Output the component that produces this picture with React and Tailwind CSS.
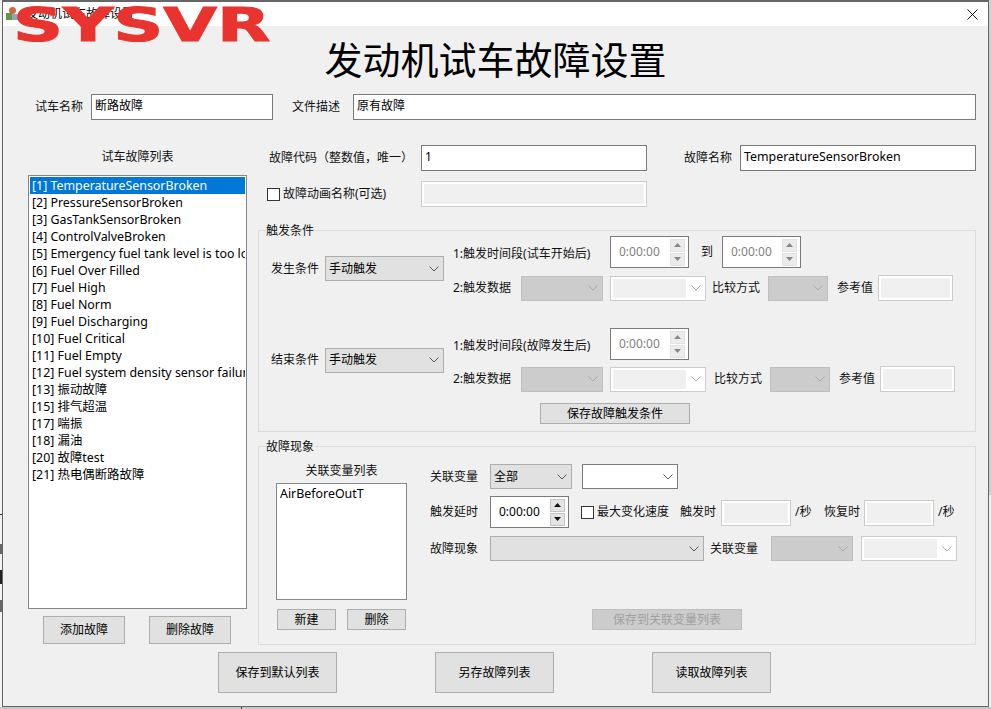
import React from "react";

const faults = [
  "[1] TemperatureSensorBroken",
  "[2] PressureSensorBroken",
  "[3] GasTankSensorBroken",
  "[4] ControlValveBroken",
  "[5] Emergency fuel tank level is too low",
  "[6] Fuel Over Filled",
  "[7] Fuel High",
  "[8] Fuel Norm",
  "[9] Fuel Discharging",
  "[10] Fuel Critical",
  "[11] Fuel Empty",
  "[12] Fuel system density sensor failure",
  "[13] 振动故障",
  "[15] 排气超温",
  "[17] 喘振",
  "[18] 漏油",
  "[20] 故障test",
  "[21] 热电偶断路故障",
];

function Chevron({ color = "#555" }) {
  return (
    <svg width="10" height="6" viewBox="0 0 10 6" fill="none" className="shrink-0">
      <path d="M0.5 0.5 L5 5 L9.5 0.5" stroke={color} strokeWidth="1" />
    </svg>
  );
}

function TextBox({ value = "", className = "" }) {
  return (
    <div className={`h-[26px] shrink-0 border border-[#7a7a7a] bg-white pl-[3px] leading-[22px] text-black ${className}`}>
      {value}
    </div>
  );
}

function OffBox({ className = "" }) {
  return <div className={`h-[26px] shrink-0 border border-[#ccc] bg-[#f0f0f0] shadow-[inset_0_0_0_2px_#fff] ${className}`} />;
}

function Select({ value = "", className = "" }) {
  return (
    <div className={`flex h-[25px] shrink-0 items-center justify-between border border-[#adadad] bg-[#e1e1e1] pl-[3px] pr-[4px] text-black ${className}`}>
      <span>{value}</span>
      <Chevron />
    </div>
  );
}

function WhiteSelect({ className = "" }) {
  return (
    <div className={`flex h-[25px] shrink-0 items-center justify-end border border-[#7a7a7a] bg-white pr-[4px] ${className}`}>
      <Chevron />
    </div>
  );
}

function OffSelect({ className = "" }) {
  return (
    <div className={`flex h-[25px] shrink-0 items-center justify-end border border-[#bfbfbf] bg-[#ccc] pr-[4px] ${className}`}>
      <Chevron color="#aaa" />
    </div>
  );
}

function OffWhiteSelect({ className = "" }) {
  return (
    <div className={`flex h-[25px] shrink-0 items-center border border-[#ccc] bg-white pl-[2px] pr-[4px] ${className}`}>
      <div className="h-[19px] w-[73px] bg-[#f0f0f0]" />
      <div className="flex flex-1 justify-end">
        <Chevron color="#aaa" />
      </div>
    </div>
  );
}

function Arrow({ up, color }) {
  return (
    <svg width="7" height="4" viewBox="0 0 7 4" className="shrink-0">
      <path d={up ? "M3.5 0 L7 4 L0 4 Z" : "M0 0 L7 0 L3.5 4 Z"} fill={color} />
    </svg>
  );
}

function Spin({ off = true }) {
  const btn = off
    ? "border-[#e2e2e2] bg-[#ececec]"
    : "border-[#c4c4c4] bg-[#e4e4e4]";
  const color = off ? "#888" : "#111";
  return (
    <div className="flex h-[32px] w-[79px] shrink-0 items-center justify-between border border-[#7a7a7a] bg-white pl-[8px] pr-[3px]">
      <span className={off ? "text-[#7f7f7f]" : "text-black"}>0:00:00</span>
      <div className="flex flex-col gap-[1px]">
        <div className={`flex h-[13px] w-[15px] items-center justify-center border ${btn}`}>
          <Arrow up color={color} />
        </div>
        <div className={`flex h-[13px] w-[15px] items-center justify-center border ${btn}`}>
          <Arrow color={color} />
        </div>
      </div>
    </div>
  );
}

function Button({ children, className = "" }) {
  return (
    <div className={`flex shrink-0 items-center justify-center border border-[#adadad] bg-[#e1e1e1] text-black ${className}`}>
      {children}
    </div>
  );
}

function Check({ className = "" }) {
  return <div className={`h-[13px] w-[13px] shrink-0 border border-[#333] bg-white ${className}`} />;
}

function Legend({ children }) {
  return (
    <div className="absolute -top-[9px] left-[7px] h-[18px] bg-[#f0f0f0] pr-[1px] leading-[18px]">{children}</div>
  );
}

function TriggerBlock({ top, label, first, second, x }) {
  return (
    <div className={`flex ${top}`}>
      <div className="flex w-[194px] shrink-0 items-center">
        <span className="ml-[12px] w-[54px] shrink-0">{label}</span>
        <Select value="手动触发" className="w-[119px]" />
      </div>
      <div className="flex flex-col">
        <div className="flex h-[32px] items-center">
          <span className="w-[157px] shrink-0 pt-[3px]">{first}</span>
          <Spin />
          {second && (
            <>
              <span className="ml-[12px] w-[21px] shrink-0">到</span>
              <Spin />
            </>
          )}
        </div>
        <div className={`flex h-[26px] items-center ${x.mt}`}>
          <span className="w-[68px] shrink-0">2:触发数据</span>
          <OffSelect className="w-[82px]" />
          <OffWhiteSelect className="ml-[7px] w-[96px]" />
          <span className={`${x.ml} w-[56px] shrink-0`}>比较方式</span>
          <OffSelect className="w-[60px]" />
          <span className="ml-[9px] w-[41px] shrink-0">参考值</span>
          <OffBox className="w-[75px]" />
        </div>
      </div>
    </div>
  );
}

export default function App() {
  return (
    <div className="relative h-[709px] w-[991px] overflow-hidden bg-[#f2f2f2] pl-[2px] font-['Noto_Sans','Noto_Sans_CJK_SC',sans-serif] text-[12px] text-[#111]">
      <div className="absolute bottom-0 left-0 h-[2px] w-full bg-[#c6c6c6]" />
      <div className="absolute right-0 top-0 h-[495px] w-[2px] bg-[#cfcfcf]" />
      <div className="absolute bottom-0 left-[241px] h-[2px] w-[1px] bg-[#444]" />
      <div className="absolute left-0 top-[570px] h-[14px] w-[2px] bg-[#222]" />
      <div className="absolute left-0 top-[514px] h-[1px] w-[2px] bg-[#222]" />
      <div className="absolute left-0 top-[544px] h-[10px] w-[2px] bg-[#666]" />
      <div className="absolute left-0 top-[600px] h-[12px] w-[2px] bg-[#666]" />

      <div className="relative flex h-[707px] w-[987px] flex-col border border-t-2 border-[#666]">
        <div className="flex h-[24px] shrink-0 items-center bg-white pl-[3px]">
          <svg width="12" height="14" viewBox="0 0 12 14" className="shrink-0">
            <circle cx="6.5" cy="3.5" r="3.5" fill="#d9653b" />
            <rect x="0" y="6" width="6" height="7" fill="#5c9a4a" />
            <rect x="6" y="7" width="6" height="6" fill="#8fa6bf" />
          </svg>
          <span className="ml-[8px] text-black">发动机试车故障设置</span>
          <svg width="11" height="11" viewBox="0 0 11 11" className="ml-auto mr-[10px] shrink-0">
            <path d="M0.5 0.5 L10.5 10.5 M10.5 0.5 L0.5 10.5" stroke="#111" strokeWidth="1" />
          </svg>
        </div>
        <div className="flex flex-1 flex-col bg-[#f0f0f0]">
          <h1 className="mt-[13px] h-[41px] text-center text-[38px] font-normal leading-[40px] text-black">发动机试车故障设置</h1>

          <div className="mt-[14px] flex h-[26px] items-center pl-[32px]">
            <span className="w-[56px] shrink-0">试车名称</span>
            <TextBox value="断路故障" className="w-[182px]" />
            <span className="ml-[19px] w-[61px] shrink-0">文件描述</span>
            <TextBox value="原有故障" className="w-[623px]" />
          </div>

          <div className="mt-[25px] flex">
            <div className="ml-[25px] w-[219px] shrink-0">
              <div className="h-[22px] pt-[1px] text-center leading-[22px]">试车故障列表</div>
              <div className="mt-[8px] h-[434px] overflow-hidden border border-[#828790] bg-white px-[1px] pt-[1px] text-[12.4px]">
                {faults.map((f, i) => (
                  <div
                    key={f}
                    className={`h-[17px] overflow-hidden whitespace-nowrap pl-[2px] leading-[17px] ${i === 0 ? "bg-[#0078d7] text-white" : "text-black"}`}
                  >
                    {f}
                  </div>
                ))}
              </div>
              <div className="mt-[7px] flex">
                <Button className="ml-[15px] h-[28px] w-[82px]">添加故障</Button>
                <Button className="ml-[24px] h-[28px] w-[82px]">删除故障</Button>
              </div>
            </div>

            <div className="ml-[10px] w-[720px] shrink-0">
              <div className="flex h-[26px] items-center">
                <span className="ml-[12px] w-[152px] shrink-0">故障代码（整数值，唯一）</span>
                <TextBox value="1" className="w-[226px]" />
                <span className="ml-[37px] w-[56px] shrink-0">故障名称</span>
                <TextBox value="TemperatureSensorBroken" className="w-[236px] text-[12.4px]" />
              </div>
              <div className="mt-[10px] flex h-[26px] items-center">
                <Check className="ml-[10px]" />
                <span className="ml-[3px] w-[138px] shrink-0">故障动画名称(可选)</span>
                <OffBox className="w-[226px]" />
              </div>

              <div className="relative ml-[1px] mt-[23px] h-[202px] w-[718px] border border-[#dcdcdc]">
                <Legend>触发条件</Legend>
                <TriggerBlock
                  top="mt-[5px]"
                  label="发生条件"
                  first="1:触发时间段(试车开始后)"
                  second
                  x={{ mt: "mt-[7px]", ml: "ml-[6px]" }}
                />
                <TriggerBlock
                  top="mt-[27px]"
                  label="结束条件"
                  first="1:触发时间段(故障发生后)"
                  x={{ mt: "mt-[6px]", ml: "ml-[8px]" }}
                />
                <Button className="ml-[281px] mt-[11px] h-[21px] w-[150px]">保存故障触发条件</Button>
              </div>

              <div className="relative ml-[1px] mt-[14px] flex h-[199px] w-[718px] border border-[#dcdcdc]">
                <Legend>故障现象</Legend>
                <div className="ml-[17px] w-[131px] shrink-0">
                  <div className="mt-[12px] h-[22px] pt-[1px] text-center leading-[22px]">关联变量列表</div>
                  <div className="mt-[2px] h-[117px] border border-[#828790] bg-white pl-[3px] pt-[1px] text-[12.4px] leading-[17px] text-black">AirBeforeOutT</div>
                  <div className="mt-[9px] flex">
                    <Button className="ml-[1px] h-[21px] w-[59px]">新建</Button>
                    <Button className="ml-[11px] h-[21px] w-[59px]">删除</Button>
                  </div>
                </div>
                <div className="ml-[23px] flex flex-col">
                  <div className="mt-[17px] flex h-[25px] items-center">
                    <span className="w-[60px] shrink-0 pt-[1px]">关联变量</span>
                    <Select value="全部" className="w-[82px]" />
                    <WhiteSelect className="ml-[10px] w-[96px]" />
                  </div>
                  <div className="mt-[7px] flex h-[32px] items-center">
                    <span className="w-[60px] shrink-0">触发延时</span>
                    <Spin off={false} />
                    <Check className="ml-[12px]" />
                    <span className="ml-[3px] w-[83px] shrink-0">最大变化速度</span>
                    <span className="w-[41px] shrink-0">触发时</span>
                    <OffBox className="mt-[1px] w-[70px]" />
                    <span className="ml-[4px] w-[29px] shrink-0">/秒</span>
                    <span className="w-[40px] shrink-0">恢复时</span>
                    <OffBox className="mt-[1px] w-[70px]" />
                    <span className="ml-[4px] shrink-0">/秒</span>
                  </div>
                  <div className="mt-[8px] flex h-[25px] items-center">
                    <span className="w-[60px] shrink-0 pt-[1px]">故障现象</span>
                    <Select className="w-[214px]" />
                    <span className="ml-[6px] w-[61px] shrink-0">关联变量</span>
                    <OffSelect className="w-[82px]" />
                    <OffWhiteSelect className="ml-[8px] w-[96px]" />
                  </div>
                  <div className="ml-[162px] mt-[48px] flex h-[21px] w-[150px] items-center justify-center border border-[#bfbfbf] bg-[#ccc] text-[#a0a0a0]">
                    保存到关联变量列表
                  </div>
                </div>
              </div>
            </div>
          </div>

          <div className="mt-[7px] flex pl-[215px]">
            <Button className="h-[41px] w-[119px]">保存到默认列表</Button>
            <Button className="ml-[98px] h-[41px] w-[119px]">另存故障列表</Button>
            <Button className="ml-[98px] h-[41px] w-[119px]">读取故障列表</Button>
          </div>
        </div>
      </div>

      <div className="absolute left-[13px] top-[2px] origin-top-left scale-x-[1.51] font-['DejaVu_Sans',sans-serif] text-[46px] font-bold leading-[46px] text-[#e8332e] [-webkit-text-stroke:1px_#e8332e]">
        SYSVR
      </div>
    </div>
  );
}
